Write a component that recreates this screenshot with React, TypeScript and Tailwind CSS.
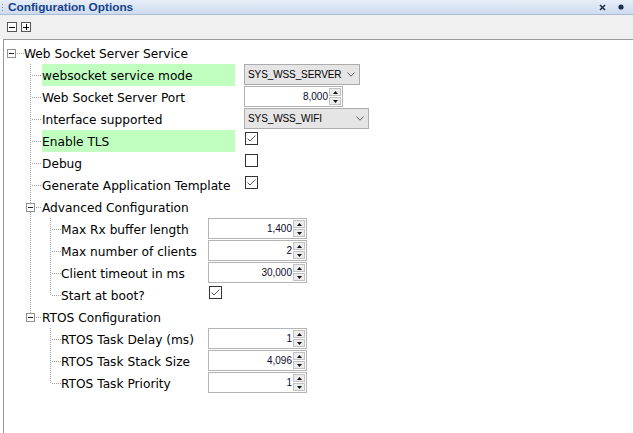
import React from "react";

type Ctrl =
  | { kind: "combo"; value: string; w: number }
  | { kind: "spin"; value: string }
  | { kind: "check"; checked: boolean };

type Item = { label: string; ctrl: Ctrl; hl?: boolean };

const topItems: Item[] = [
  { label: "websocket service mode", hl: true, ctrl: { kind: "combo", value: "SYS_WSS_SERVER", w: 116 } },
  { label: "Web Socket Server Port", ctrl: { kind: "spin", value: "8,000" } },
  { label: "Interface supported", ctrl: { kind: "combo", value: "SYS_WSS_WIFI", w: 125 } },
  { label: "Enable TLS", hl: true, ctrl: { kind: "check", checked: true } },
  { label: "Debug", ctrl: { kind: "check", checked: false } },
  { label: "Generate Application Template", ctrl: { kind: "check", checked: true } },
];

const groups: { label: string; items: Item[] }[] = [
  {
    label: "Advanced Configuration",
    items: [
      { label: "Max Rx buffer length", ctrl: { kind: "spin", value: "1,400" } },
      { label: "Max number of clients", ctrl: { kind: "spin", value: "2" } },
      { label: "Client timeout in ms", ctrl: { kind: "spin", value: "30,000" } },
      { label: "Start at boot?", ctrl: { kind: "check", checked: true } },
    ],
  },
  {
    label: "RTOS Configuration",
    items: [
      { label: "RTOS Task Delay (ms)", ctrl: { kind: "spin", value: "1" } },
      { label: "RTOS Task Stack Size", ctrl: { kind: "spin", value: "4,096" } },
      { label: "RTOS Task Priority", ctrl: { kind: "spin", value: "1" } },
    ],
  },
];

const DOT = { stroke: "#a0a0a0", strokeDasharray: "1 1", strokeWidth: 1 };

function Expander({ x }: { x: number }) {
  return (
    <>
      <rect x={x + 0.5} y={7.5} width={8} height={8} fill="#fff" stroke="#919191" />
      <line x1={x + 2} x2={x + 7} y1={11.5} y2={11.5} stroke="#222" />
    </>
  );
}

function Gutter({ type, last, parentLast }: { type: "root" | "item" | "group" | "sub"; last?: boolean; parentLast?: boolean }) {
  const w = type === "root" ? 20 : type === "sub" ? 57 : 38;
  return (
    <svg width={w} height={22} shapeRendering="crispEdges" className="shrink-0">
      {type === "root" && (
        <>
          <Expander x={3} />
          <line x1={13} x2={20} y1={11.5} y2={11.5} {...DOT} />
        </>
      )}
      {type === "item" && (
        <>
          <line x1={26.5} x2={26.5} y1={0} y2={last ? 12 : 22} {...DOT} />
          <line x1={28} x2={38} y1={11.5} y2={11.5} {...DOT} />
        </>
      )}
      {type === "group" && (
        <>
          <line x1={26.5} x2={26.5} y1={0} y2={7} {...DOT} />
          {!last && <line x1={26.5} x2={26.5} y1={16} y2={22} {...DOT} />}
          <Expander x={22} />
          <line x1={32} x2={38} y1={11.5} y2={11.5} {...DOT} />
        </>
      )}
      {type === "sub" && (
        <>
          {!parentLast && <line x1={26.5} x2={26.5} y1={0} y2={22} {...DOT} />}
          <line x1={46.5} x2={46.5} y1={0} y2={last ? 12 : 22} {...DOT} />
          <line x1={48} x2={57} y1={11.5} y2={11.5} {...DOT} />
        </>
      )}
    </svg>
  );
}

function Control({ ctrl }: { ctrl: Ctrl }) {
  if (ctrl.kind === "combo") {
    return (
      <div
        className="h-[21px] flex items-center justify-between border border-[#acacac] bg-[#e5e5e5] pl-[3px] pr-[4px] text-[10px] text-black font-['Liberation_Sans',Arial,sans-serif]"
        style={{ width: ctrl.w }}
      >
        <span className="tracking-[-0.1px]">{ctrl.value}</span>
        <svg width="8" height="5" viewBox="0 0 8 5" className="shrink-0">
          <path d="M0.5 0.5 L4 4.2 L7.5 0.5" fill="none" stroke="#606060" strokeWidth="1" />
        </svg>
      </div>
    );
  }
  if (ctrl.kind === "spin") {
    return (
      <div className="w-[99px] h-[21px] flex border border-[#b4b4b4] bg-white">
        <div className="flex-1 flex items-center justify-end pr-[1px] text-[10px] text-[#0a0a28] font-['Liberation_Sans',Arial,sans-serif]">
          {ctrl.value}
        </div>
        <div className="flex flex-col gap-[1px] py-[1px] pr-[1px]">
          <div className="w-[12px] h-[8px] flex items-center justify-center bg-[#ececec] border border-[#c2c2c2]">
            <svg width="5" height="3" viewBox="0 0 5 3">
              <path d="M2.5 0 L5 3 L0 3 Z" fill="#111" />
            </svg>
          </div>
          <div className="w-[12px] h-[8px] flex items-center justify-center bg-[#ececec] border border-[#c2c2c2]">
            <svg width="5" height="3" viewBox="0 0 5 3">
              <path d="M0 0 L5 0 L2.5 3 Z" fill="#111" />
            </svg>
          </div>
        </div>
      </div>
    );
  }
  return (
    <div className="mt-[2px] ml-[1px] w-[13px] h-[13px] border border-[#333] bg-white flex items-center justify-center">
      {ctrl.checked && (
        <svg width="11" height="11" viewBox="0 0 11 11">
          <path d="M1.5 5.5 L4 8 L9.5 2.5" fill="none" stroke="#555" strokeWidth="1" />
        </svg>
      )}
    </div>
  );
}

function Label({ text, w, hl }: { text: string; w: number; hl?: boolean }) {
  return (
    <div
      className={`h-[22px] leading-[24px] whitespace-nowrap shrink-0 ${hl ? "bg-[#c0ffc0]" : ""}`}
      style={{ width: w }}
    >
      {text}
    </div>
  );
}

export default function App() {
  return (
    <div className="w-[633px] h-[433px] overflow-hidden bg-white flex flex-col font-['DejaVu_Sans',Verdana,sans-serif] text-[12.2px] text-black">
      {/* Title bar */}
      <div className="h-[15px] shrink-0 flex items-center bg-linear-to-b from-[#e6eef8] to-[#cfdcee] border-b border-[#a9bcd6]">
        <svg width="6" height="12" className="shrink-0">
          <rect x="2" y="3" width="1" height="1" fill="#8a8a8a" />
          <rect x="2" y="6" width="1" height="1" fill="#8a8a8a" />
          <rect x="2" y="9" width="1" height="1" fill="#8a8a8a" />
        </svg>
        <span className="ml-[2px] font-['Liberation_Sans',Arial,sans-serif] font-bold text-[11.8px] text-[#15428b] leading-[14px]">
          Configuration Options
        </span>
        <div className="flex-1" />
        <svg width="7" height="7" viewBox="0 0 7 7" className="mr-[12px]">
          <path d="M1 1 L6 6 M6 1 L1 6" stroke="#1c2f4d" strokeWidth="1.6" />
        </svg>
        <svg width="6" height="6" viewBox="0 0 6 6" className="mr-[9px]">
          <circle cx="3" cy="3" r="2.6" fill="#1c2f4d" />
        </svg>
      </div>

      {/* Toolbar */}
      <div className="h-[24px] shrink-0 bg-[#f0f0f0] flex items-start gap-[4px] pl-[7px] pt-[7px]">
        <div className="w-[10px] h-[10px] border border-[#555] bg-white flex items-center justify-center">
          <div className="w-[6px] h-[1px] bg-black" />
        </div>
        <div className="w-[10px] h-[10px] border border-[#555] bg-white flex items-center justify-center">
          <svg width="6" height="6" viewBox="0 0 6 6" shapeRendering="crispEdges">
            <rect x="0" y="2.5" width="6" height="1" fill="#000" />
            <rect x="2.5" y="0" width="1" height="6" fill="#000" />
          </svg>
        </div>
      </div>

      {/* Tree */}
      <div className="flex-1 ml-[3px] border-l border-t border-[#9a9a9a] pt-[2px]">
        <div className="flex h-[22px]">
          <Gutter type="root" />
          <Label text="Web Socket Server Service" w={220} />
        </div>

        {topItems.map((it) => (
          <div key={it.label} className="flex h-[22px] items-start">
            <Gutter type="item" />
            <Label text={it.label} w={193} hl={it.hl} />
            <div className="ml-[9px]">
              <Control ctrl={it.ctrl} />
            </div>
          </div>
        ))}

        {groups.map((g, gi) => {
          const gLast = gi === groups.length - 1;
          return (
            <React.Fragment key={g.label}>
              <div className="flex h-[22px]">
                <Gutter type="group" last={gLast} />
                <Label text={g.label} w={200} />
              </div>
              {g.items.map((it, i) => (
                <div key={it.label} className="flex h-[22px] items-start">
                  <Gutter type="sub" last={i === g.items.length - 1} parentLast={gLast} />
                  <Label text={it.label} w={147} hl={it.hl} />
                  <div>
                    <Control ctrl={it.ctrl} />
                  </div>
                </div>
              ))}
            </React.Fragment>
          );
        })}
      </div>
    </div>
  );
}
